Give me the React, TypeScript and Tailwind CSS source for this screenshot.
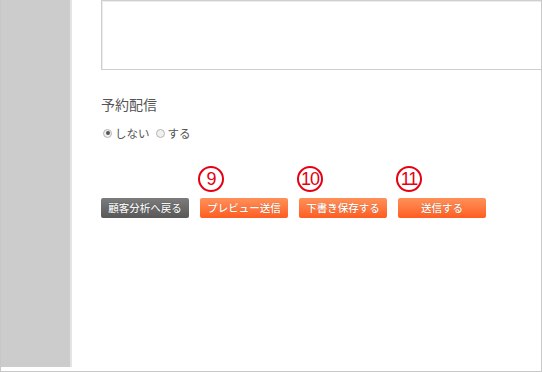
import React from "react";

const font = { fontFamily: '"Noto Sans CJK JP", "Noto Sans", sans-serif' };

const Radio = ({ checked }: { checked?: boolean }) => (
    <span className="flex h-[9px] w-[9px] items-center justify-center rounded-full border border-[#b5b5b5] bg-[#f0f0f0]">
        {checked && <span className="h-[4px] w-[4px] rounded-full bg-[#555]" />}
    </span>
);

const Marker = ({ n }: { n: number }) => (
    <div
        className="-ml-[2px] flex h-[26px] w-[26px] items-center justify-center rounded-full border-2 border-[#e60012] text-[18px] font-light leading-none tracking-[-1px] text-[#e60012]"
        style={{ fontFamily: '"Liberation Sans", sans-serif' }}
    >
        {n}
    </div>
);

const ActionButton = ({ label, gray, marker }: { label: string; gray?: boolean; marker?: number }) => (
    <div className="flex w-[88px] flex-col items-start">
        <div className="flex h-[32px] items-start">
            {marker !== undefined && <Marker n={marker} />}
        </div>
        <button
            className={
                gray
                    ? "h-[20px] w-[88px] rounded-[2px] bg-gradient-to-b from-[#7c7c7c] to-[#585858] text-[10.5px] font-medium text-[#f4f4f4] [text-shadow:0_0_1px_rgba(0,0,0,0.5)]"
                    : "h-[20px] w-[88px] rounded-[2px] bg-gradient-to-b from-[#ff9058] to-[#ff5c1e] text-[10.5px] font-medium text-white [text-shadow:0_0_1px_rgba(0,0,0,0.3)]"
            }
        >
            {label}
        </button>
    </div>
);

export default function App() {
    return (
        <div className="flex h-[372px] w-[542px] flex-col border-x border-b border-[#c8c8c8] bg-white" style={font}>
            <div className="flex h-[367px] shrink-0">
                <div className="w-[71px] shrink-0 border-r-2 border-[#e4e4e4] bg-[#cccccc]" />
                <div className="flex flex-1 flex-col pl-[29px]">
                    <div className="h-[70px] border-b border-l border-t border-[#cfcfcf] bg-white shadow-[inset_1px_1px_0_#ececec]" />
                    <h2 className="mt-[24px] text-[14px] leading-[20px] text-[#555]">予約配信</h2>
                    <div className="mt-[11px] flex items-center gap-[3px] pl-[2px] text-[11.5px] leading-[16px] text-[#555]">
                        <Radio checked />
                        <span className="mr-[3px]">しない</span>
                        <Radio />
                        <span>する</span>
                    </div>
                    <div className="mt-[25px] flex gap-[11px]">
                        <ActionButton label="顧客分析へ戻る" gray />
                        <ActionButton label="プレビュー送信" marker={9} />
                        <ActionButton label="下書き保存する" marker={10} />
                        <ActionButton label="送信する" marker={11} />
                    </div>
                </div>
            </div>
        </div>
    );
}
